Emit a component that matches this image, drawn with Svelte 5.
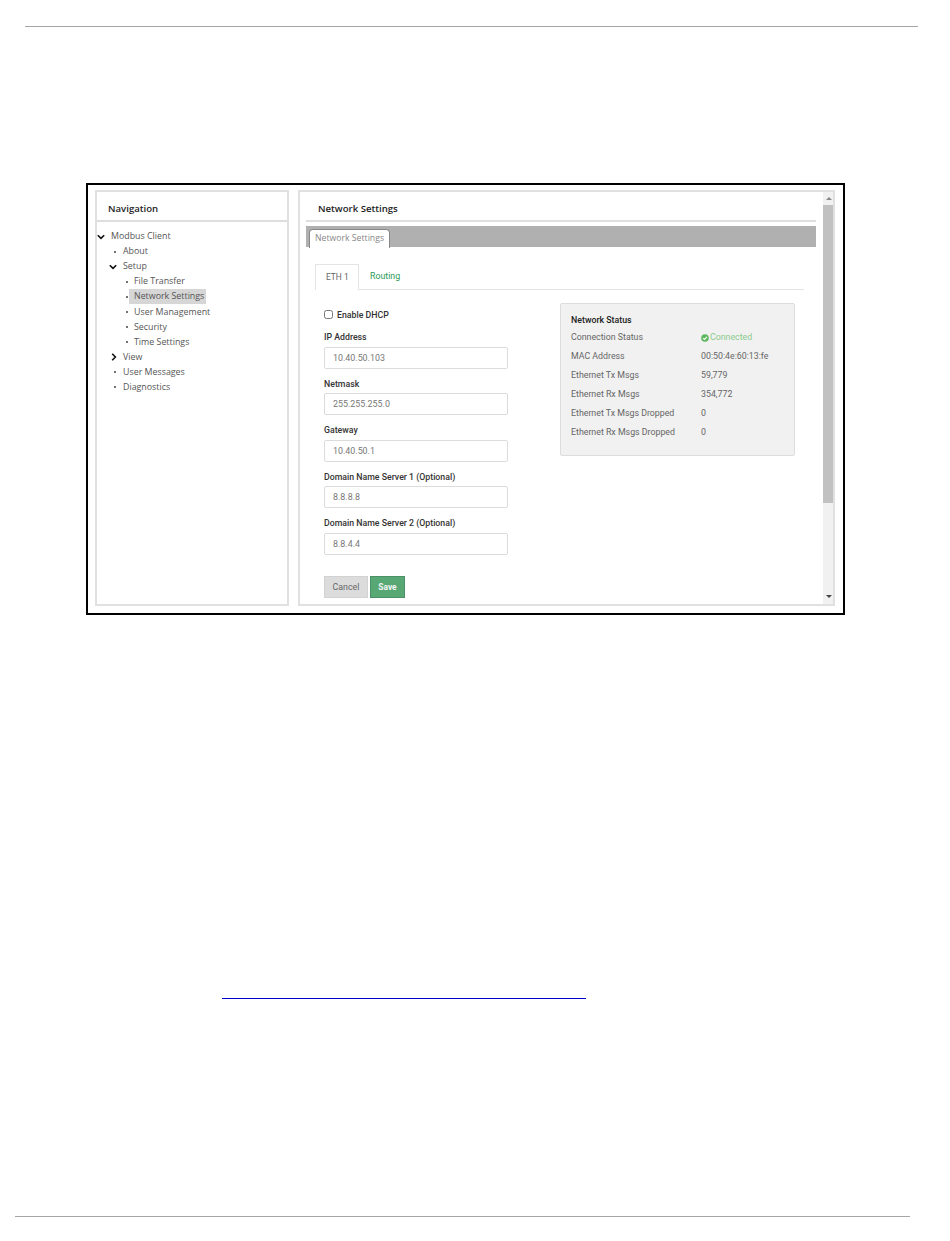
<script>
  const tree = [
    { label: 'Modbus Client', level: 0, icon: 'down' },
    { label: 'About', level: 1, icon: 'dot' },
    { label: 'Setup', level: 1, icon: 'down' },
    { label: 'File Transfer', level: 2, icon: 'dot' },
    { label: 'Network Settings', level: 2, icon: 'dot', active: true },
    { label: 'User Management', level: 2, icon: 'dot' },
    { label: 'Security', level: 2, icon: 'dot' },
    { label: 'Time Settings', level: 2, icon: 'dot' },
    { label: 'View', level: 1, icon: 'right' },
    { label: 'User Messages', level: 1, icon: 'dot' },
    { label: 'Diagnostics', level: 1, icon: 'dot' }
  ];

  const fields = [
    { label: 'IP Address', value: '10.40.50.103' },
    { label: 'Netmask', value: '255.255.255.0' },
    { label: 'Gateway', value: '10.40.50.1' },
    { label: 'Domain Name Server 1 (Optional)', value: '8.8.8.8' },
    { label: 'Domain Name Server 2 (Optional)', value: '8.8.4.4' }
  ];

  const stats = [
    ['MAC Address', '00:50:4e:60:13:fe'],
    ['Ethernet Tx Msgs', '59,779'],
    ['Ethernet Rx Msgs', '354,772'],
    ['Ethernet Tx Msgs Dropped', '0'],
    ['Ethernet Rx Msgs Dropped', '0']
  ];
</script>

<div class="page">
  <div class="rule top-rule"></div>

  <div class="frame">
    <aside class="panel nav">
      <h2 class="nav-title">Navigation</h2>
      <ul class="tree">
        {#each tree as item}
          <li class="node level-{item.level}">
            <span class="marker">
              {#if item.icon === 'down'}
                <svg class="chev" width="8" height="6" viewBox="0 0 8 6"><path d="M.8 1.2 4 4.4 7.2 1.2" fill="none" stroke="#111" stroke-width="1.6" /></svg>
              {:else if item.icon === 'right'}
                <svg class="chev side" width="6" height="8" viewBox="0 0 6 8"><path d="M1.2.8 4.4 4 1.2 7.2" fill="none" stroke="#111" stroke-width="1.6" /></svg>
              {:else}
                <i class="dot"></i>
              {/if}
            </span>
            <span class="node-label" class:active={item.active}>{item.label}</span>
          </li>
        {/each}
      </ul>
    </aside>

    <section class="panel main">
      <div class="main-scroll">
        <h2 class="main-title">Network Settings</h2>
        <div class="band">
          <div class="band-tab">Network Settings</div>
        </div>

        <div class="tabs">
          <span class="tab current">ETH 1</span>
          <span class="tab link">Routing</span>
        </div>

        <div class="columns">
          <form class="form">
            <label class="check"><input type="checkbox" /> <span>Enable DHCP</span></label>
            {#each fields as f}
              <div class="field">
                <div class="field-label">{f.label}</div>
                <input class="text" type="text" value={f.value} />
              </div>
            {/each}
            <div class="buttons">
              <button type="button" class="btn cancel">Cancel</button>
              <button type="button" class="btn save">Save</button>
            </div>
          </form>

          <div class="status">
            <h3 class="status-title">Network Status</h3>
            <div class="status-row">
              <span class="key">Connection Status</span>
              <span class="connected">
                <svg width="8" height="8" viewBox="0 0 8 8"><circle cx="4" cy="4" r="3.8" fill="#5cb85c" /><path d="M2.1 4.1 3.5 5.4 5.9 2.8" fill="none" stroke="#fff" stroke-width="1.2" /></svg>
                Connected
              </span>
            </div>
            {#each stats as row}
              <div class="status-row">
                <span class="key">{row[0]}</span>
                <span class="val">{row[1]}</span>
              </div>
            {/each}
          </div>
        </div>
      </div>

      <div class="scrollbar">
        <svg class="arrow" width="6" height="3" viewBox="0 0 6 3"><path d="M3 0 6 3H0z" fill="#888" /></svg>
        <div class="thumb"></div>
        <svg class="arrow end" width="6" height="3" viewBox="0 0 6 3"><path d="M0 0h6L3 3z" fill="#444" /></svg>
      </div>
    </section>
  </div>

  <div class="link-line"></div>
  <div class="rule bottom-rule"></div>
</div>

<style>
  :global(body) {
    margin: 0;
    background: #fff;
  }

  .page {
    width: 950px;
    height: 1241px;
    overflow: hidden;
    padding-top: 26px;
    box-sizing: border-box;
  }

  .rule {
    height: 1px;
    background: #a6a6a6;
  }

  .top-rule {
    margin-left: 25px;
    width: 893px;
  }

  .bottom-rule {
    margin: 217px 0 0 15px;
    width: 895px;
  }

  .link-line {
    margin: 383px 0 0 222px;
    width: 364px;
    height: 1px;
    background: #0000d0;
  }

  .frame {
    margin: 156px 0 0 86px;
    width: 759px;
    height: 432px;
    box-sizing: border-box;
    border: 2px solid #000;
    padding: 5px 8px 7px 7px;
    display: flex;
    gap: 9px;
  }

  .panel {
    border: 2px solid #e0e0e0;
    box-sizing: border-box;
    background: #fff;
  }

  /* left tree */
  .nav {
    width: 194px;
    font-family: 'Open Sans', sans-serif;
  }

  .nav-title {
    margin: 0;
    height: 30px;
    padding: 9px 0 0 11px;
    box-sizing: border-box;
    border-bottom: 2px solid #dedede;
    font-size: 9.6px;
    line-height: 15px;
    font-weight: 600;
    color: #222;
  }

  .tree {
    list-style: none;
    margin: 0;
    padding: 7px 0 0;
    font-size: 8.85px;
    color: #555;
  }

  .node {
    display: flex;
    align-items: center;
    height: 15.1px;
  }

  .marker {
    display: flex;
    align-items: center;
    justify-content: center;
    flex: none;
  }

  .level-0 .marker { width: 13px; }
  .level-1 { padding-left: 11px; }
  .level-1 .marker { width: 14px; }
  .level-2 { padding-left: 23px; }
  .level-2 .marker { width: 13px; }

  .chev {
    margin-right: 5px;
  }

  .chev.side {
    margin-right: 2px;
  }

  .dot {
    width: 2px;
    height: 2px;
    border-radius: 50%;
    background: #444;
  }

  .node-label {
    padding: 0 2px 0 1px;
    line-height: 15px;
    white-space: nowrap;
  }

  .node-label.active {
    background: #d6d6d6;
    padding-left: 5px;
    margin-left: -4px;
  }

  /* right panel */
  .main {
    flex: 1;
    display: flex;
    overflow: hidden;
    padding-left: 6px;
    font-family: Roboto, sans-serif;
  }

  .main-scroll {
    width: 510px;
    height: 100%;
    overflow: hidden;
    flex: none;
  }

  .main-title {
    margin: 0;
    height: 30px;
    padding: 9px 0 0 12px;
    box-sizing: border-box;
    border-bottom: 2px solid #dedede;
    font-family: 'Open Sans', sans-serif;
    font-size: 9.6px;
    line-height: 15px;
    font-weight: 600;
    color: #222;
  }

  .band {
    margin-top: 4px;
    height: 21px;
    background: #b0b0b0;
    padding: 3px 0 0 3px;
    box-sizing: border-box;
  }

  .band-tab {
    width: 81px;
    height: 19px;
    box-sizing: border-box;
    border: 1px solid #888;
    border-bottom: 0;
    border-radius: 4px 4px 0 0;
    background: #fff;
    padding-left: 5px;
    font-family: 'Open Sans', sans-serif;
    font-size: 8.7px;
    line-height: 17px;
    color: #888;
    white-space: nowrap;
  }

  .tabs {
    margin: 17px 12px 0 9px;
    height: 26px;
    display: flex;
    box-sizing: border-box;
    border-bottom: 1px solid #e4e4e4;
  }

  .tab {
    font-size: 8.8px;
    line-height: 25px;
    padding: 0 11px;
  }

  .tab.current {
    width: 44px;
    box-sizing: border-box;
    height: 26px;
    border: 1px solid #e4e4e4;
    border-bottom: 0;
    background: #fff;
    color: #666;
    font-size: 8.4px;
    padding: 0 10px;
    white-space: nowrap;
  }

  .tab.link {
    color: #2a9a5a;
  }

  .columns {
    display: flex;
    padding-left: 18px;
  }

  .form {
    width: 184px;
    flex: none;
  }

  .check {
    display: flex;
    align-items: center;
    gap: 4px;
    margin-top: 17px;
    height: 15px;
    font-size: 8.75px;
    font-weight: 500;
    color: #333;
  }

  .check input {
    margin: 0;
    width: 9px;
    height: 9px;
  }

  .field-label {
    margin-top: 7px;
    height: 15.5px;
    font-size: 8.75px;
    line-height: 16px;
    font-weight: 500;
    color: #333;
    white-space: nowrap;
  }

  .text {
    display: block;
    width: 184px;
    height: 22px;
    margin-top: 2px;
    box-sizing: border-box;
    border: 1px solid #dcdcdc;
    border-radius: 2px;
    padding: 0 8px;
    font-family: Roboto, sans-serif;
    font-size: 8.9px;
    color: #777;
    background: #fff;
  }

  .buttons {
    display: flex;
    gap: 2px;
    margin-top: 21px;
  }

  .btn {
    height: 22px;
    padding: 0;
    font-family: Roboto, sans-serif;
    font-size: 8.8px;
    border-radius: 0;
  }

  .cancel {
    width: 44px;
    background: #dcdcdc;
    border: 1px solid #d2d2d2;
    color: #666;
  }

  .save {
    width: 35px;
    background: #58a876;
    border: 1px solid #4d8f66;
    color: #f4f4f4;
    font-weight: 700;
    font-size: 8.4px;
  }

  .status {
    margin: 13px 0 0 52px;
    width: 235px;
    height: 153px;
    box-sizing: border-box;
    background: #f1f1f1;
    border: 1px solid #dddddd;
    border-radius: 2px;
    padding: 8px 10px 0;
    font-size: 8.8px;
    color: #666;
  }

  .status-title {
    margin: 0;
    font-size: 8.8px;
    line-height: 16px;
    font-weight: 500;
    color: #222;
  }

  .status-row {
    display: flex;
    height: 19px;
    line-height: 19px;
  }

  .key {
    width: 130px;
    flex: none;
    white-space: nowrap;
  }

  .connected {
    display: flex;
    align-items: center;
    gap: 1px;
    color: #8ccb8c;
  }

  .scrollbar {
    width: 12px;
    margin-left: 7px;
    background: #f1f1f1;
    display: flex;
    flex-direction: column;
    align-items: center;
    padding-top: 5px;
    box-sizing: border-box;
  }

  .arrow {
    flex: none;
  }

  .arrow.end {
    margin-top: auto;
    margin-bottom: 6px;
  }

  .thumb {
    width: 11px;
    height: 298px;
    margin-top: 5px;
    background: #c1c1c1;
  }
</style>
